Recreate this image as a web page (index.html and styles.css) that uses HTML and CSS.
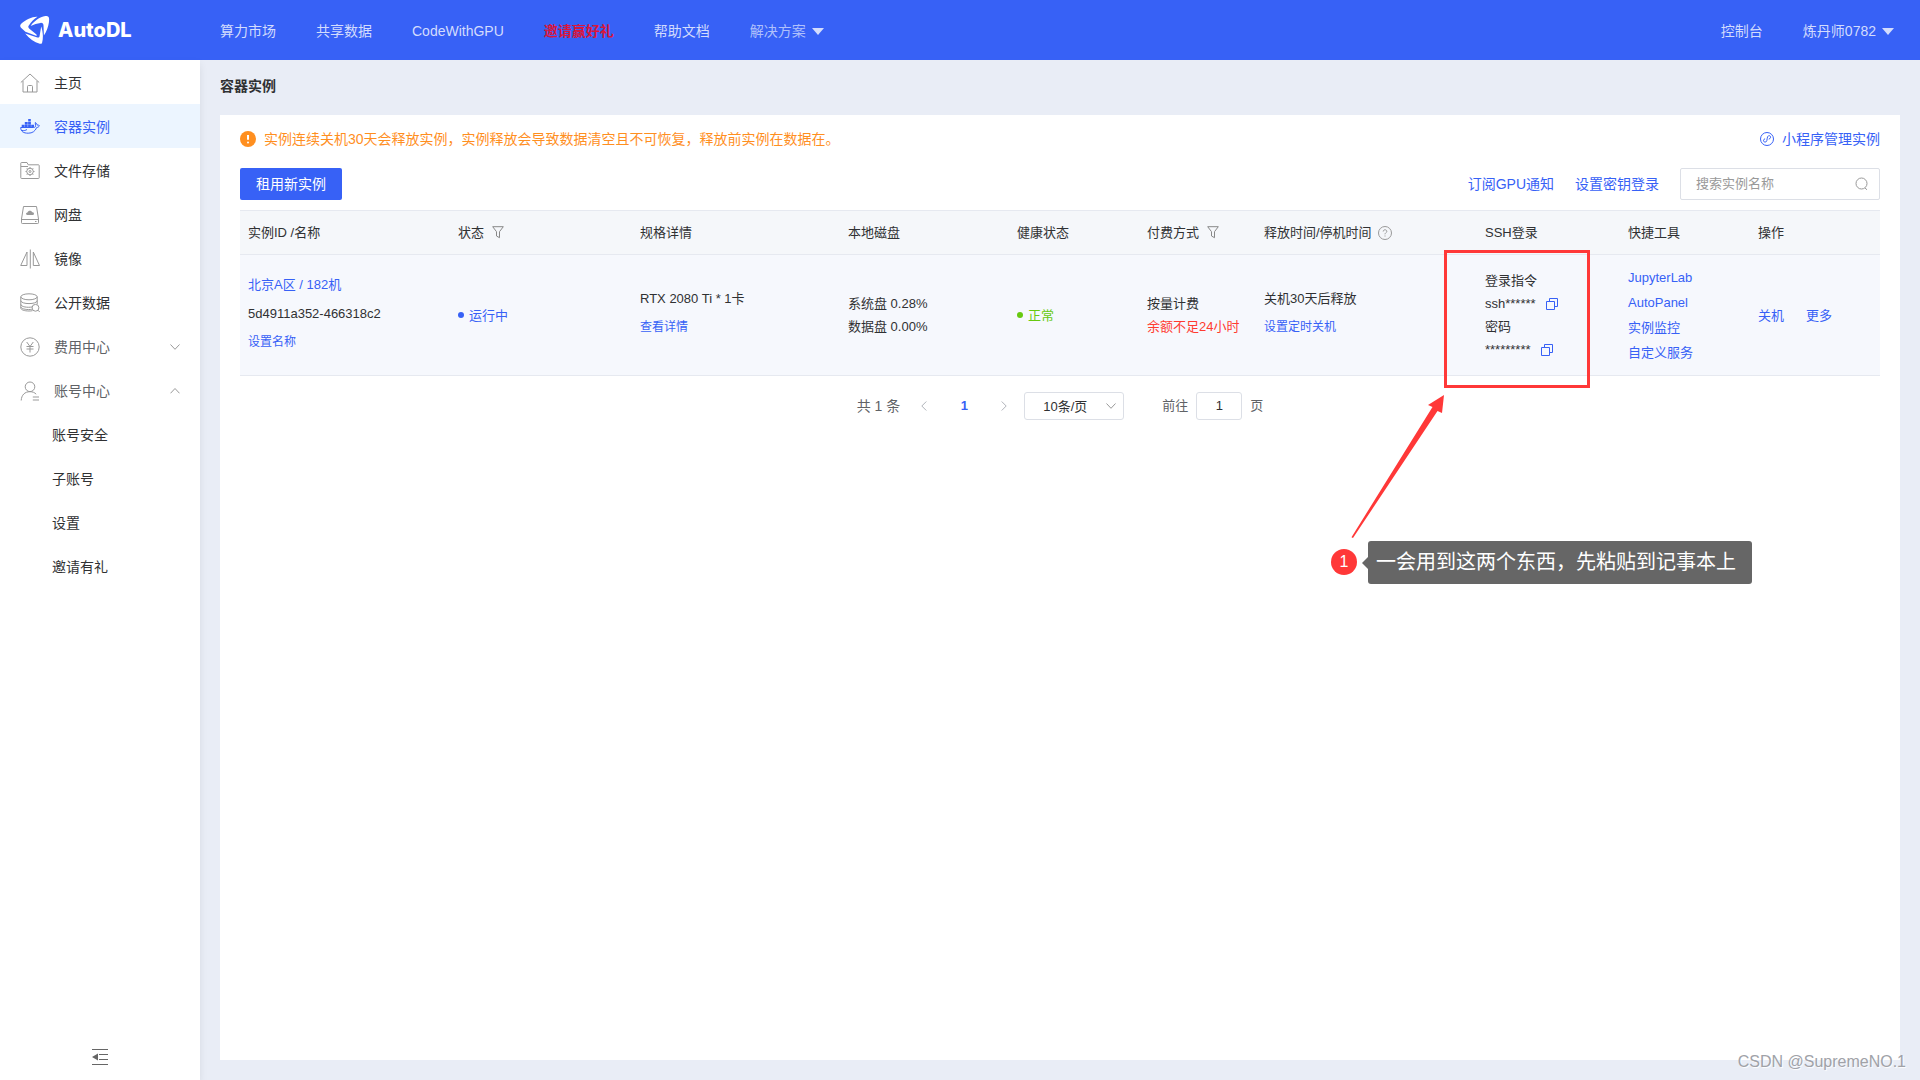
FILE: index.html
```html
<!DOCTYPE html>
<html lang="zh-CN">
<head>
<meta charset="utf-8">
<title>容器实例 - AutoDL</title>
<meta name="viewport" content="width=device-width, initial-scale=1">
<link rel="stylesheet" href="styles.css">
</head>
<body>
<header class="topbar">
  <a class="logo" href="#">
    <svg class="mark" width="30" height="28" viewBox="0 0 30 28" aria-hidden="true">
      <path d="M17.500 .8C12.500 .4 6 3.500 1.200 7.800 0 9-.2 10.300 1 11.700l4.400 4.100 11.300 4.200-.2-1.500-7.100-5.800c-1.400-1.200-1.400-2.300-.4-3.500C11.200 6 14 3 17.500 .8z"/>
      <path d="M10.700 10C14 5 19.500 1.300 25.400.1c2.200-.4 3.600.4 3.700 2.600.2 4-1 9.200-3.300 13.600l-1.900 3.100-.4-9.800c-.1-2-1-2.900-3-2.700-3.300.4-6.500 1.500-9.800 3.100z"/>
      <path d="M5.200 17.400l12.200 4.100c1.300.3 2-.2 2.200-1.500l1.600-9.600c.9 2.400 1.600 6 1.700 9.600 0 2.300-.2 4.500-.8 6.700-.4 1.100-1.200 1.400-2.300 1C14.200 26 9.200 22.600 5.200 17.400z"/>
    </svg>
    <span class="logo-text">AutoDL</span>
  </a>
  <nav class="topnav">
    <a href="#">算力市场</a>
    <a href="#">共享数据</a>
    <a href="#">CodeWithGPU</a>
    <a class="topnav-hot" href="#">邀请赢好礼</a>
    <a href="#">帮助文档</a>
    <button class="drop drop-dim" type="button">解决方案
      <svg width="12" height="7" viewBox="0 0 12 7" aria-hidden="true"><path d="M0 0h12L6 7z"/></svg>
    </button>
  </nav>
  <div class="topuser">
    <a href="#">控制台</a>
    <button class="drop" type="button">炼丹师0782
      <svg width="12" height="7" viewBox="0 0 12 7" aria-hidden="true"><path d="M0 0h12L6 7z"/></svg>
    </button>
  </div>
</header>

<div class="layout">
  <aside class="sidebar">
    <nav class="menu">
      <a class="menu-item" href="#">
        <svg class="icon" viewBox="0 0 20 20"><path d="M.8 9.500L10 1l9.200 8.500M3 8v11h14V8M7.500 19v-5.500q0-1 1-1h3q1 0 1 1V19"/></svg>
        <span>主页</span>
      </a>
      <a class="menu-item active" href="#">
        <svg class="icon" viewBox="0 0 20 20"><path fill="currentColor" stroke="none" d="M8.200 2h2.600v2.600H8.200zM4.800 4.900h2.900v2.500H4.800zM8.100 4.900h2.800v2.500H8.100zM1.700 7.700h2.800V10.500H1.700zM4.800 7.700h2.900V10.500H4.800zM8.100 7.700h2.800V10.500H8.100zM11.200 7.700H14V10.500h-2.800z"/><path d="M.7 10.500h12.800c1.500 0 2.300-.8 2.100-2.200-.1-1-.6-1.500-.3-2.800 1.200.6 1.600 1.500 1.800 2.500 1 0 1.800.2 2.300.6-.5 1.300-1.300 1.700-2.700 1.900-1.500 3.800-4.300 5.700-8.500 5.700C3.500 16.200.8 14.600.7 10.500zM2 13.500c2 .3 3.500 0 5-1"/></svg>
        <span>容器实例</span>
      </a>
      <a class="menu-item" href="#">
        <svg class="icon" viewBox="0 0 20 20"><path d="M.8 16.800V2.200q0-.7.700-.7H7l1.200 2.300h10.300q.7 0 .7.700v12.300q0 .7-.7.700h-17q-.7 0-.7-.7zM1 5.500h7"/><circle cx="10" cy="10.500" r="3.300"/><circle cx="10" cy="10.500" r="1"/><path d="M10 6v1.200M10 13.800V15M5.500 10.500h1.200M13.300 10.500h1.200M6.800 7.300l.9.900M12.300 12.800l.9.900M6.800 13.700l.9-.9M12.300 8.200l.9-.9"/></svg>
        <span>文件存储</span>
      </a>
      <a class="menu-item" href="#">
        <svg class="icon" viewBox="0 0 20 20"><path d="M3.500 1.500h13l2 12.500v3.700q0 .8-.8.800H2.300q-.8 0-.8-.8V14zM1.500 14.500h17M15 16.500h1.500"/><path fill="currentColor" stroke="none" d="M7.300 10C5.500 10 5.600 7.500 7.500 7.600c.5-2.500 4-2.500 4.700-.4 2.300-.2 2.400 2.800.4 2.800z"/></svg>
        <span>网盘</span>
      </a>
      <a class="menu-item" href="#">
        <svg class="icon" viewBox="0 0 20 20"><path d="M10.300.5v19M7 3v13.500H.7zM13.300 3v13.500h6.200z"/></svg>
        <span>镜像</span>
      </a>
      <a class="menu-item" href="#">
        <svg class="icon" viewBox="0 0 20 20"><ellipse cx="9" cy="3.800" rx="8.200" ry="3"/><path d="M.8 3.800V15c0 1.800 3.500 3 8.200 3 1.300 0 2.500-.1 3.500-.3M17.200 3.800v7.500M.8 7.600c0 4 16.400 4 16.400 0M.8 11.300c0 2.600 7 3.600 11.500 2.600M.8 14c1 2.300 7 3 11 2.300"/><circle cx="15.500" cy="14.800" r="3.400"/><path d="M18 17.200l1.700 1.800"/></svg>
        <span>公开数据</span>
      </a>
      <button class="menu-item group" type="button">
        <svg class="icon" viewBox="0 0 20 20"><circle cx="10" cy="10" r="9.200"/><path d="M6.700 5l3.300 4.500L13.300 5M10 9.500V15.500M6.500 9.500h7M6.500 12h7"/></svg>
        <span>费用中心</span>
        <svg class="chev" viewBox="0 0 10 6"><path d="M.5.500L5 5.300 9.500.5"/></svg>
      </button>
      <button class="menu-item group" type="button">
        <svg class="icon" viewBox="0 0 20 20"><circle cx="10" cy="5.800" r="4.800"/><path d="M1.200 19.500c.3-5.500 3.500-8.800 8.800-8.800 2.500 0 4.600.8 6.200 2.500M12.800 16h6.200M12.800 19h6.200"/></svg>
        <span>账号中心</span>
        <svg class="chev" viewBox="0 0 10 6"><path d="M.5 5.300L5 .5l4.500 4.800"/></svg>
      </button>
      <a class="menu-item sub" href="#">账号安全</a>
      <a class="menu-item sub" href="#">子账号</a>
      <a class="menu-item sub" href="#">设置</a>
      <a class="menu-item sub" href="#">邀请有礼</a>
    </nav>
    <button class="collapse" type="button" aria-label="收起菜单">
      <svg width="16" height="18" viewBox="0 0 16 18"><path d="M0 1.500h16M7 6.500h9M7 11.500h9M0 16.500h16" stroke="#666"/><path d="M0 9l6-3.500v7z" fill="#666"/></svg>
    </button>
  </aside>

  <main class="main">
    <h1 class="page-title">容器实例</h1>
    <section class="card">
      <div class="notice">
        <svg width="16" height="16" viewBox="0 0 16 16" aria-hidden="true"><circle cx="8" cy="8" r="8" fill="#ff8f1f"/><path d="M8 4v4.800" stroke="#fff" stroke-width="2"/><circle cx="8" cy="11.500" r="1" fill="#fff"/></svg>
        <p class="notice-text">实例连续关机30天会释放实例，实例释放会导致数据清空且不可恢复，释放前实例在数据在。</p>
        <a class="mini" href="#">
          <svg width="14" height="14" viewBox="0 0 14 14" aria-hidden="true"><circle cx="7" cy="7" r="6.500"/><path d="M8.800 7.200c3-1.200 1.800-4-.2-3.500C6.500 4.400 7.800 9 5.800 10c-1.900.9-3.700-2.200-.7-3.300"/></svg>
          <span>小程序管理实例</span>
        </a>
      </div>
      <div class="toolbar">
        <button class="primary" type="button">租用新实例</button>
        <div class="tools">
          <a href="#">订阅GPU通知</a>
          <a href="#">设置密钥登录</a>
          <label class="search">
            <input type="search" placeholder="搜索实例名称" aria-label="搜索实例名称">
            <svg width="14" height="14" viewBox="0 0 14 14" aria-hidden="true"><circle cx="6.500" cy="6.500" r="5.500"/><path d="M10 11l2 1.800"/></svg>
          </label>
        </div>
      </div>

      <table class="grid">
        <colgroup>
          <col class="c-id"><col class="c-state"><col class="c-spec"><col class="c-disk"><col class="c-health"><col class="c-pay"><col class="c-free"><col class="c-ssh"><col class="c-tool"><col class="c-act">
        </colgroup>
        <thead>
          <tr>
            <th scope="col">实例ID /名称</th>
            <th scope="col"><span class="th">状态 <svg class="filter" viewBox="0 0 12 13"><path d="M.7.700h10.600L7.500 5.700v6L4.500 10V5.700z"/></svg></span></th>
            <th scope="col">规格详情</th>
            <th scope="col">本地磁盘</th>
            <th scope="col">健康状态</th>
            <th scope="col"><span class="th">付费方式 <svg class="filter" viewBox="0 0 12 13"><path d="M.7.700h10.600L7.500 5.700v6L4.500 10V5.700z"/></svg></span></th>
            <th scope="col"><span class="th th-help">释放时间/停机时间 <svg class="help" viewBox="0 0 14 14"><circle cx="7" cy="7" r="6.500"/><path d="M5.200 5.500c0-2.300 3.600-2.300 3.600-.1C8.800 6.700 7 6.700 7 8.300M7 9.500v1"/></svg></span></th>
            <th scope="col">SSH登录</th>
            <th scope="col">快捷工具</th>
            <th scope="col">操作</th>
          </tr>
        </thead>
        <tbody>
          <tr>
            <td><div class="stack">
              <a href="#">北京A区 / 182机</a>
              <span>5d4911a352-466318c2</span>
              <a class="small" href="#">设置名称</a>
            </div></td>
            <td><span class="state running">运行中</span></td>
            <td><div class="stack">
              <span>RTX 2080 Ti * 1卡</span>
              <a class="small" href="#">查看详情</a>
            </div></td>
            <td>系统盘 0.28%<br>数据盘 0.00%</td>
            <td><span class="state healthy">正常</span></td>
            <td>按量计费<br><span class="danger">余额不足24小时</span></td>
            <td><div class="stack">
              <span>关机30天后释放</span>
              <a class="small" href="#">设置定时关机</a>
            </div></td>
            <td>
              <div>登录指令</div>
              <div class="secret">ssh******
                <button type="button" aria-label="复制登录指令"><svg viewBox="0 0 14 14"><path d="M1.500 4.500h8v8h-8z"/><path d="M4.500 4V1.500h8v8H10"/></svg></button>
              </div>
              <div>密码</div>
              <div class="secret">*********
                <button type="button" aria-label="复制密码"><svg viewBox="0 0 14 14"><path d="M1.500 4.500h8v8h-8z"/><path d="M4.500 4V1.500h8v8H10"/></svg></button>
              </div>
            </td>
            <td><div class="links">
              <a href="#">JupyterLab</a>
              <a href="#">AutoPanel</a>
              <a href="#">实例监控</a>
              <a href="#">自定义服务</a>
            </div></td>
            <td><div class="actions"><a href="#">关机</a><a href="#">更多</a></div></td>
          </tr>
        </tbody>
      </table>

      <div class="pager">
        <span class="total">共 1 条</span>
        <div class="pages">
          <button type="button" aria-label="上一页"><svg viewBox="0 0 6 10"><path d="M5.300.500L.8 5l4.500 4.500"/></svg></button>
          <button class="current" type="button">1</button>
          <button type="button" aria-label="下一页"><svg viewBox="0 0 6 10"><path d="M.7.500L5.200 5 .7 9.500"/></svg></button>
        </div>
        <label class="size">
          <select aria-label="每页条数"><option>10条/页</option></select>
          <svg class="chev" viewBox="0 0 10 6"><path d="M.5.500L5 5.300 9.500.5"/></svg>
        </label>
        <label class="jump">前往 <input type="text" value="1"> 页</label>
      </div>
    </section>
  </main>
</div>

<div class="annotation">
  <svg class="arrow" width="421" height="335" viewBox="0 0 421 335" aria-hidden="true">
    <path d="M114.500 1.500h143v135h-143z" fill="none" stroke="#ff3838" stroke-width="3"/>
    <path d="M113 145l-2 18-4.500-2L22 288l-1.500-.8L101.500 157l-4.500-2z" fill="#ff3838"/>
  </svg>
  <span class="step">1</span>
  <p class="note">一会用到这两个东西，先粘贴到记事本上</p>
</div>
<div class="watermark">CSDN @SupremeNO.1</div>
</body>
</html>
```

FILE: styles.css
```css
* {
  box-sizing: border-box;
}

body {
  margin: 0;
  min-height: 100vh;
  display: flex;
  flex-direction: column;
  position: relative;
  background: #e9edf6;
  color: #303133;
  font: 14px/22px "Liberation Sans", "Noto Sans CJK SC", sans-serif;
}

a {
  color: #3761f6;
  text-decoration: none;
}

button,
input,
select {
  font: inherit;
  color: inherit;
}

button {
  padding: 0;
  border: 0;
  background: none;
  cursor: pointer;
}

p,
h1 {
  margin: 0;
}

svg {
  display: block;
  flex: none;
  fill: none;
}

/* Top bar */
.topbar {
  display: flex;
  align-items: center;
  height: 60px;
  padding: 0 26px 0 20px;
  background: #3761f6;
}

.logo {
  display: flex;
  align-items: center;
  gap: 8px;
  width: 200px;
  color: #fff;
}

.mark {
  fill: #fff;
}

.logo-text {
  font: 800 20px/28px Inter, sans-serif;
}

.topnav,
.topuser {
  display: flex;
  align-items: center;
  gap: 40px;
  padding-top: 2px;
}

.topuser {
  margin-left: auto;
}

.topbar nav a,
.topuser a,
.drop {
  color: #d3dcfd;
}

.topbar nav .topnav-hot {
  color: #d8163c;
  font-weight: 700;
}

.drop {
  display: flex;
  align-items: center;
  gap: 6px;
}

.drop svg {
  fill: #d3dcfd;
}

.drop-dim {
  color: #afc0fb;
}

/* Side menu */
.layout {
  flex: 1;
  display: flex;
}

.sidebar {
  display: flex;
  flex-direction: column;
  justify-content: space-between;
  flex: none;
  width: 200px;
  padding-bottom: 14px;
  background: #fff;
  box-shadow: 0 4px 8px rgba(0, 0, 0, 0.08);
}

.menu-item {
  display: flex;
  align-items: center;
  gap: 14px;
  width: 100%;
  height: 44px;
  padding: 1px 20px 0;
  color: #303133;
}

.menu-item.active {
  background: #ecf5ff;
  color: #3761f6;
}

.menu-item.group {
  color: #606266;
}

.menu-item.sub {
  padding-left: 52px;
}

.icon {
  width: 20px;
  height: 20px;
  stroke: #999;
  color: #999;
}

.active .icon {
  stroke: #3761f6;
  color: #3761f6;
}

.chev {
  width: 10px;
  height: 6px;
  stroke: #999;
}

.menu-item .chev {
  margin-left: auto;
}

.collapse {
  align-self: center;
}

/* Content */
.main {
  flex: 1;
  min-width: 0;
  display: flex;
  flex-direction: column;
  padding: 15px 20px 20px;
}

.page-title {
  margin-bottom: 18px;
  font-size: 14px;
  line-height: 22px;
}

.card {
  flex: 1;
  padding: 12px 20px 20px;
  background: #fff;
}

.notice {
  display: flex;
  align-items: center;
  gap: 8px;
  height: 24px;
}

.notice-text {
  color: #ff8f1f;
}

.mini {
  display: flex;
  align-items: center;
  gap: 8px;
  margin-left: auto;
}

.mini svg {
  stroke: #3761f6;
}

.toolbar {
  display: flex;
  justify-content: space-between;
  margin: 17px 0 10px;
}

.primary {
  height: 32px;
  padding: 0 16px;
  border-radius: 2px;
  background: #3761f6;
  color: #fff;
}

.tools {
  display: flex;
  align-items: center;
  gap: 21px;
}

.search {
  display: flex;
  align-items: center;
  width: 200px;
  height: 32px;
  padding: 0 10px 0 15px;
  border: 1px solid #dcdfe6;
  border-radius: 2px;
  font-size: 13px;
}

.search input {
  flex: 1;
  min-width: 0;
  padding: 0;
  border: 0;
  outline: 0;
  background: none;
}

.search input::placeholder {
  color: #999;
}

.search svg {
  stroke: #999;
}

/* Instance table */
.grid {
  width: 100%;
  table-layout: fixed;
  border-collapse: separate;
  border-spacing: 0;
  border-top: 1px solid #e6e9f0;
  font-size: 13px;
  line-height: 23px;
}

.c-id { width: 210px; }
.c-state { width: 182px; }
.c-spec { width: 208px; }
.c-disk { width: 169px; }
.c-health { width: 130px; }
.c-pay { width: 117px; }
.c-free { width: 221px; }
.c-ssh { width: 143px; }
.c-tool { width: 130px; }
.c-act { width: 130px; }

.grid th,
.grid td {
  padding: 0 0 0 8px;
  border-bottom: 1px solid #e6e9f0;
  text-align: left;
  white-space: nowrap;
}

.grid th {
  height: 44px;
  background: #f5f7fa;
  font-weight: 400;
}

.grid td {
  height: 121px;
  background: #f6f8fd;
}

.th {
  display: flex;
  align-items: center;
  gap: 8px;
}

.th-help {
  gap: 6px;
}

.filter {
  width: 12px;
  height: 13px;
  stroke: #888;
}

.help {
  width: 14px;
  height: 14px;
  stroke: #999;
}

.stack {
  display: flex;
  flex-direction: column;
  align-items: flex-start;
  gap: 6px;
  padding-bottom: 4px;
}

.small {
  font-size: 12px;
}

.state {
  display: flex;
  align-items: center;
  gap: 5px;
}

.state::before {
  content: "";
  width: 6px;
  height: 6px;
  border-radius: 50%;
  background: currentColor;
}

.running {
  color: #3761f6;
}

.healthy {
  color: #67c910;
}

.danger {
  color: #ff3b30;
}

.secret {
  display: flex;
  align-items: center;
  gap: 9px;
}

.secret svg {
  width: 14px;
  height: 14px;
  stroke: #3761f6;
}

.links {
  display: grid;
  justify-items: start;
  line-height: 25px;
}

.actions {
  display: flex;
  gap: 22px;
}

/* Pagination */
.pager {
  display: flex;
  align-items: center;
  justify-content: center;
  margin-top: 16px;
  color: #606266;
  font-size: 13px;
  line-height: 28px;
}

.total {
  font-size: 14px;
}

.pages {
  display: flex;
  align-items: center;
  margin-left: 4px;
}

.pages button {
  display: flex;
  align-items: center;
  justify-content: center;
  width: 40px;
  height: 28px;
}

.pages svg {
  width: 6px;
  height: 10px;
  stroke: #b0b3ba;
}

.pages .current {
  color: #3761f6;
  font-weight: 700;
}

.size {
  display: grid;
  align-items: center;
  width: 100px;
}

.size select,
.size .chev {
  grid-area: 1 / 1;
}

.size select {
  appearance: none;
  width: 100%;
  height: 28px;
  padding: 0 18px;
  border: 1px solid #dcdfe6;
  border-radius: 3px;
  background: #fff;
  color: #303133;
}

.size .chev {
  justify-self: end;
  margin-right: 8px;
  pointer-events: none;
}

.jump {
  display: flex;
  gap: 8px;
  margin-left: 38px;
}

.jump input {
  width: 46px;
  height: 28px;
  padding: 0;
  border: 1px solid #dcdfe6;
  border-radius: 3px;
  color: #303133;
  text-align: center;
}

/* Step callout floating over the table */
.annotation {
  position: absolute;
  top: 250px;
  right: 168px;
  width: 421px;
  height: 334px;
  display: flex;
  align-items: flex-end;
  gap: 11px;
  pointer-events: none;
}

.arrow {
  position: absolute;
  top: 0;
  left: 0;
}

.step {
  width: 26px;
  height: 26px;
  margin-bottom: 9px;
  border-radius: 50%;
  background: #ff3838;
  color: #fff;
  font-size: 16px;
  line-height: 26px;
  text-align: center;
}

.note {
  position: relative;
  flex: 1;
  padding: 0 8px;
  border-radius: 3px;
  background: #666;
  color: #fff;
  font-size: 20px;
  line-height: 43px;
  white-space: nowrap;
}

.note::before {
  content: "";
  position: absolute;
  top: 16px;
  left: -6px;
  border: solid transparent;
  border-width: 6px 6px 6px 0;
  border-right-color: #666;
}

.watermark {
  position: absolute;
  right: 14px;
  bottom: 8px;
  color: #a0a2a8;
  font-size: 16px;
  line-height: 20px;
  text-shadow: 1px 1px 1px #fff;
}
```
